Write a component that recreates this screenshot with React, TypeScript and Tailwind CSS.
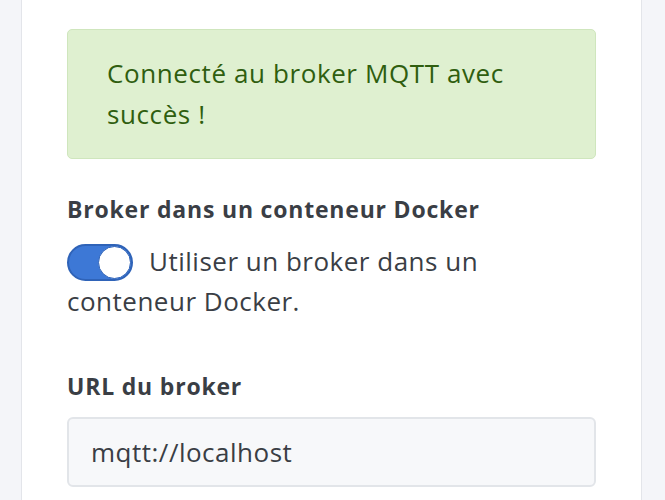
export default function App() {
  return (
    <div className="min-h-screen w-[665px] h-[500px] overflow-hidden bg-[#f4f5f9] font-['Open_Sans',sans-serif]">
      <div className="ml-[21px] w-[621px] min-h-[500px] bg-white border-x border-[#e3e5ea] px-[45px] pt-[29px]">
        {/* Success alert */}
        <div className="h-[130px] rounded-[5px] border border-[#cfe6bd] bg-[#dff0d0] pl-[39px] pr-[40px] pt-[23px] text-[26px] tracking-[0.6px] leading-[41px] text-[#2f5e0f]">
          Connecté au broker MQTT avec succès !
        </div>

        {/* Docker toggle */}
        <div className="mt-[35px]">
          <div className="text-[23px] font-bold tracking-[0.8px] leading-[30px] text-[#3a3e45]">Broker dans un conteneur Docker</div>
          <div className="mt-[17px] text-[26px] tracking-[0.5px] leading-[40px] text-[#3a3e45]">
            <span className="relative inline-block align-middle mr-[16px] -mt-[4px] h-[37px] w-[66px] rounded-full border-2 border-[#2f63b8] bg-[#3d78d6]">
              <span className="absolute right-0 top-0 h-[33px] w-[33px] rounded-full bg-white border border-[#2f63b8]" />
            </span>
            Utiliser un broker dans un conteneur Docker.
          </div>
        </div>

        {/* Broker URL */}
        <div className="mt-[50px]">
          <div className="text-[23px] font-bold tracking-[0.8px] leading-[30px] text-[#3a3e45]">URL du broker</div>
          <div className="mt-[16px] h-[70px] rounded-[6px] border-2 border-[#e2e5e9] bg-[#f7f8fa] flex items-center pl-[22px] text-[26px] tracking-[0.5px] text-[#3a3e45]">
            mqtt://localhost
          </div>
        </div>
      </div>
    </div>
  )
}
